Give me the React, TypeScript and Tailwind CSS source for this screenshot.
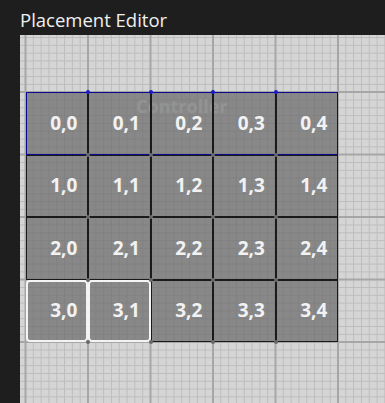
const ROWS = 4;
const COLS = 5;
const CELL = 62.5;

// cells drawn with a white rounded outline
const SELECTED = ["3,0", "3,1"];

const Cell = ({ r, c }: { r: number; c: number }) => {
  const label = `${r},${c}`;
  const selected = SELECTED.includes(label);
  return (
    <div
      className={
        selected
          ? "flex items-center justify-center pl-[14px] bg-[rgba(107,107,107,0.73)] border-2 border-[#f4f4f4] rounded-[4px]"
          : "flex items-center justify-center pl-[14px] bg-[rgba(107,107,107,0.73)] border border-[#1a1a1a]"
      }
    >
      <span className="text-[#f2f2f2] text-[19px] font-bold leading-none [font-family:'Open_Sans',sans-serif]">
        {label}
      </span>
    </div>
  );
};

const App = () => {
  const junctions: { x: number; y: number }[] = [];
  for (let j = 0; j <= ROWS; j++) {
    for (let i = 1; i < COLS; i++) {
      junctions.push({ x: i * CELL, y: j * CELL });
    }
  }

  return (
    <div className="w-[385px] h-[403px] bg-[#1e1e1e] flex flex-col overflow-hidden [font-family:'Open_Sans',sans-serif]">
      {/* Title */}
      <div className="h-[35px] pl-5 pt-[9px] shrink-0">
        <span className="text-[#f0f0f0] text-[18.5px] leading-none">Placement Editor</span>
      </div>

      {/* Canvas */}
      <div className="flex-1 ml-5 pl-[5.5px] pt-[57px] bg-[#d5d5d5] [background-image:linear-gradient(to_right,#a6a6a6_2px,transparent_2px),linear-gradient(to_bottom,#a6a6a6_2px,transparent_2px),linear-gradient(to_right,#bdbdbd_1px,transparent_1px),linear-gradient(to_bottom,#bdbdbd_1px,transparent_1px)] [background-size:62.5px_62.5px,62.5px_62.5px,7.8125px_7.8125px,7.8125px_7.8125px] [background-position:4.5px_-6.5px,4.5px_-6.5px,5px_2px,5px_2px]">
        <div className="relative w-[312.5px] h-[250px]">
          {/* Watermark label behind the cells */}
          <div className="absolute left-0 right-0 top-[5px] text-center text-white text-[18px] font-bold leading-none">
            Controller
          </div>

          <div className="relative grid grid-cols-[repeat(5,62.5px)] grid-rows-[repeat(4,62.5px)]">
            {Array.from({ length: ROWS }).map((_, r) =>
              Array.from({ length: COLS }).map((_, c) => <Cell key={`${r}-${c}`} r={r} c={c} />)
            )}
          </div>

          {/* Row 0 outline */}
          <div className="absolute left-0 top-0 w-[312.5px] h-[62.5px] border-[1.5px] border-[#0a0a8c] pointer-events-none" />

          {/* Junction handles */}
          {junctions.map((p, k) => (
            <div
              key={k}
              className={
                p.y === 0
                  ? "absolute w-[4px] h-[4px] -ml-[2px] -mt-[2px] rounded-full bg-[#1a1ad0]"
                  : "absolute w-[4px] h-[4px] -ml-[2px] -mt-[2px] rounded-full bg-[#6a6a6a]"
              }
              style={{ left: p.x, top: p.y }}
            />
          ))}
        </div>
      </div>
    </div>
  );
};

export default App;
